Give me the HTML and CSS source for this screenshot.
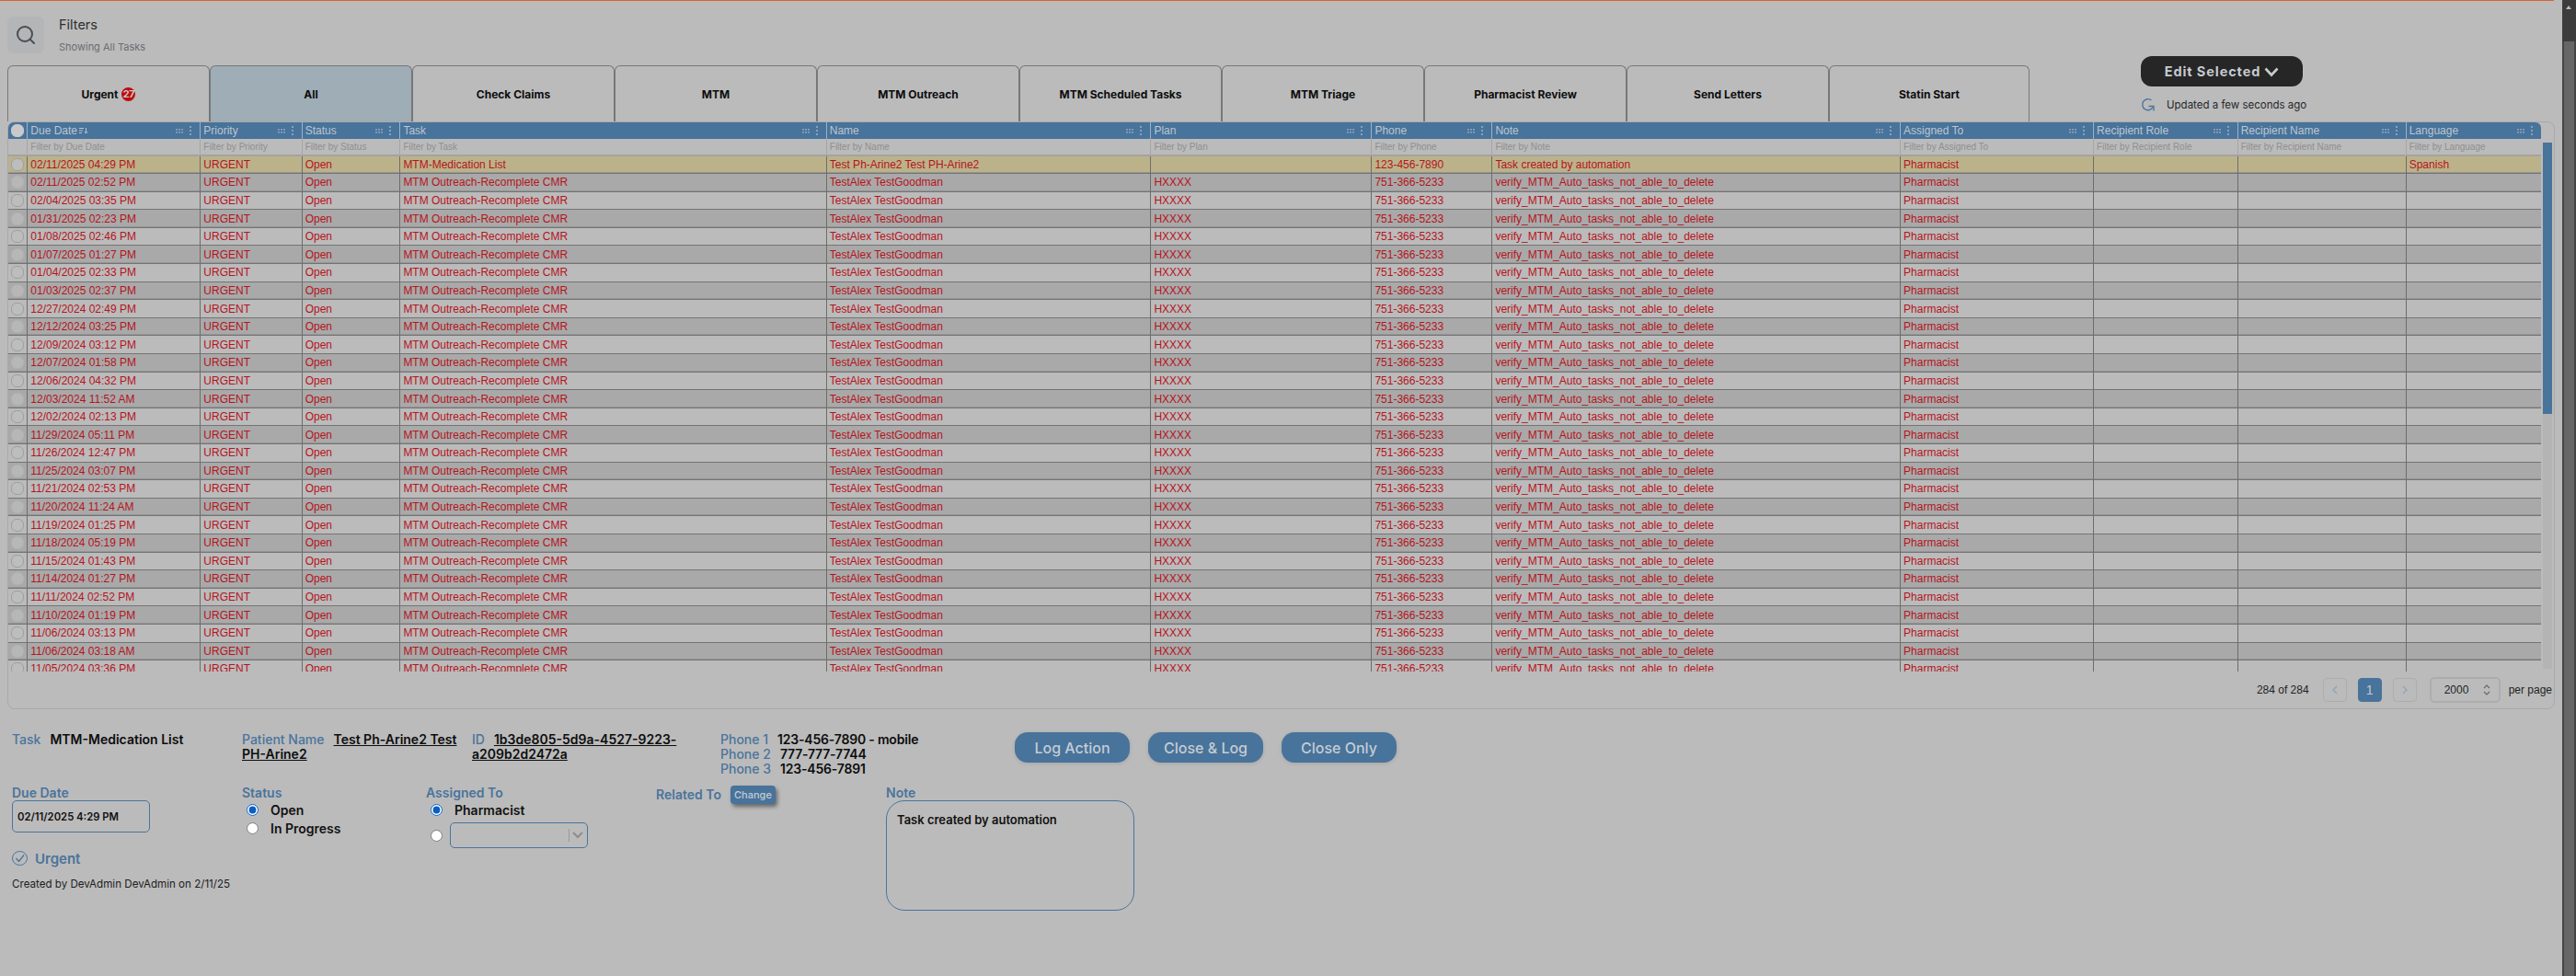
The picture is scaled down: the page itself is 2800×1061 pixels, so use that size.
FILE: index.html
```html
<!DOCTYPE html>
<html lang="en">
<head>
<meta charset="utf-8">
<title>Tasks</title>
<link rel="stylesheet" href="styles.css">
</head>
<body>
<svg class="defs" width="0" height="0" aria-hidden="true">
  <symbol id="grip" viewBox="0 0 20 10">
    <g fill="#8aa2ba">
      <rect x="0" y="3" width="2" height="1.6"/><rect x="3" y="3" width="2" height="1.6"/><rect x="6" y="3" width="2" height="1.6"/>
      <rect x="0" y="6" width="2" height="1.6"/><rect x="3" y="6" width="2" height="1.6"/><rect x="6" y="6" width="2" height="1.6"/>
      <rect x="15" y="0" width="2" height="2"/><rect x="15" y="4" width="2" height="2"/><rect x="15" y="8" width="2" height="2"/>
    </g>
  </symbol>
</svg>
<div class="window">
  <main class="page">
    <div class="accent"></div>
    <header class="filters">
      <div class="search-box">
        <svg width="24" height="24" viewBox="0 0 24 24" fill="none" stroke="#4a4d52" stroke-width="2" stroke-linecap="round"><circle cx="11" cy="11" r="8"/><path d="M21 21l-4.35-4.35"/></svg>
      </div>
      <div class="filters-text">
        <div class="filters-title">Filters</div>
        <div class="filters-sub">Showing All Tasks</div>
      </div>
    </header>
    <section class="tabbar">
      <nav class="tabs">
        <a class="tab">Urgent <span class="badge">27</span></a>
        <a class="tab tab-active">All</a>
        <a class="tab">Check Claims</a>
        <a class="tab">MTM</a>
        <a class="tab">MTM Outreach</a>
        <a class="tab">MTM Scheduled Tasks</a>
        <a class="tab">MTM Triage</a>
        <a class="tab">Pharmacist Review</a>
        <a class="tab">Send Letters</a>
        <a class="tab">Statin Start</a>
      </nav>
      <div class="tab-side">
        <button class="edit-btn">Edit Selected
          <svg width="16" height="12" viewBox="0 0 16 12" fill="none" stroke="#c6ccd2" stroke-width="2.6"><path d="M1.5 2.5L8 9.5l6.5-7"/></svg>
        </button>
        <div class="updated">
          <svg width="16" height="15" viewBox="0 0 16 15" fill="none" stroke="#4a749c" stroke-width="1.4"><path d="M11.5 3A6 6 0 1 0 13 10.5"/><path d="M8.5 9.5h5.5v5"/></svg>
          <span>Updated a few seconds ago</span>
        </div>
      </div>
    </section>
    <section class="grid-card">
      <div class="grid-body">
        <div class="grid-scroll">
          <table class="grid">
            <colgroup>
              <col class="c-chk"><col class="c-due"><col class="c-pri"><col class="c-sta"><col class="c-task"><col class="c-name"><col class="c-plan"><col class="c-phone"><col class="c-note"><col class="c-asg"><col class="c-role"><col class="c-rname"><col class="c-lang">
            </colgroup>
            <thead>
              <tr class="head">
                <th class="first"><span class="chk chk-head"></span></th>
                <th><div class="th"><span>Due Date<svg class="sort" width="10" height="8" viewBox="0 0 10 8" fill="none" stroke="#b8c4d0"><path d="M0 1.5h5M0 4h4M0 6.5h3M7.5 1v6M5.8 5.2L7.5 7l1.7-1.8"/></svg></span><svg class="grip"><use href="#grip"/></svg></div></th>
                <th><div class="th"><span>Priority</span><svg class="grip"><use href="#grip"/></svg></div></th>
                <th><div class="th"><span>Status</span><svg class="grip"><use href="#grip"/></svg></div></th>
                <th><div class="th"><span>Task</span><svg class="grip"><use href="#grip"/></svg></div></th>
                <th><div class="th"><span>Name</span><svg class="grip"><use href="#grip"/></svg></div></th>
                <th><div class="th"><span>Plan</span><svg class="grip"><use href="#grip"/></svg></div></th>
                <th><div class="th"><span>Phone</span><svg class="grip"><use href="#grip"/></svg></div></th>
                <th><div class="th"><span>Note</span><svg class="grip"><use href="#grip"/></svg></div></th>
                <th><div class="th"><span>Assigned To</span><svg class="grip"><use href="#grip"/></svg></div></th>
                <th><div class="th"><span>Recipient Role</span><svg class="grip"><use href="#grip"/></svg></div></th>
                <th><div class="th"><span>Recipient Name</span><svg class="grip"><use href="#grip"/></svg></div></th>
                <th class="last"><div class="th"><span>Language</span><svg class="grip"><use href="#grip"/></svg></div></th>
              </tr>
              <tr class="filter">
                <th></th><th>Filter by Due Date</th><th>Filter by Priority</th><th>Filter by Status</th><th>Filter by Task</th><th>Filter by Name</th><th>Filter by Plan</th><th>Filter by Phone</th><th>Filter by Note</th><th>Filter by Assigned To</th><th>Filter by Recipient Role</th><th>Filter by Recipient Name</th><th>Filter by Language</th>
              </tr>
            </thead>
            <tbody>
              <tr class="selected"><td><span class="chk"></span></td><td>02/11/2025 04:29 PM</td><td>URGENT</td><td>Open</td><td>MTM-Medication List</td><td>Test Ph-Arine2 Test PH-Arine2</td><td></td><td>123-456-7890</td><td>Task created by automation</td><td>Pharmacist</td><td></td><td></td><td>Spanish</td></tr>
              <tr><td><span class="chk"></span></td><td>02/11/2025 02:52 PM</td><td>URGENT</td><td>Open</td><td>MTM Outreach-Recomplete CMR</td><td>TestAlex TestGoodman</td><td>HXXXX</td><td>751-366-5233</td><td>verify_MTM_Auto_tasks_not_able_to_delete</td><td>Pharmacist</td><td></td><td></td><td></td></tr>
              <tr><td><span class="chk"></span></td><td>02/04/2025 03:35 PM</td><td>URGENT</td><td>Open</td><td>MTM Outreach-Recomplete CMR</td><td>TestAlex TestGoodman</td><td>HXXXX</td><td>751-366-5233</td><td>verify_MTM_Auto_tasks_not_able_to_delete</td><td>Pharmacist</td><td></td><td></td><td></td></tr>
              <tr><td><span class="chk"></span></td><td>01/31/2025 02:23 PM</td><td>URGENT</td><td>Open</td><td>MTM Outreach-Recomplete CMR</td><td>TestAlex TestGoodman</td><td>HXXXX</td><td>751-366-5233</td><td>verify_MTM_Auto_tasks_not_able_to_delete</td><td>Pharmacist</td><td></td><td></td><td></td></tr>
              <tr><td><span class="chk"></span></td><td>01/08/2025 02:46 PM</td><td>URGENT</td><td>Open</td><td>MTM Outreach-Recomplete CMR</td><td>TestAlex TestGoodman</td><td>HXXXX</td><td>751-366-5233</td><td>verify_MTM_Auto_tasks_not_able_to_delete</td><td>Pharmacist</td><td></td><td></td><td></td></tr>
              <tr><td><span class="chk"></span></td><td>01/07/2025 01:27 PM</td><td>URGENT</td><td>Open</td><td>MTM Outreach-Recomplete CMR</td><td>TestAlex TestGoodman</td><td>HXXXX</td><td>751-366-5233</td><td>verify_MTM_Auto_tasks_not_able_to_delete</td><td>Pharmacist</td><td></td><td></td><td></td></tr>
              <tr><td><span class="chk"></span></td><td>01/04/2025 02:33 PM</td><td>URGENT</td><td>Open</td><td>MTM Outreach-Recomplete CMR</td><td>TestAlex TestGoodman</td><td>HXXXX</td><td>751-366-5233</td><td>verify_MTM_Auto_tasks_not_able_to_delete</td><td>Pharmacist</td><td></td><td></td><td></td></tr>
              <tr><td><span class="chk"></span></td><td>01/03/2025 02:37 PM</td><td>URGENT</td><td>Open</td><td>MTM Outreach-Recomplete CMR</td><td>TestAlex TestGoodman</td><td>HXXXX</td><td>751-366-5233</td><td>verify_MTM_Auto_tasks_not_able_to_delete</td><td>Pharmacist</td><td></td><td></td><td></td></tr>
              <tr><td><span class="chk"></span></td><td>12/27/2024 02:49 PM</td><td>URGENT</td><td>Open</td><td>MTM Outreach-Recomplete CMR</td><td>TestAlex TestGoodman</td><td>HXXXX</td><td>751-366-5233</td><td>verify_MTM_Auto_tasks_not_able_to_delete</td><td>Pharmacist</td><td></td><td></td><td></td></tr>
              <tr><td><span class="chk"></span></td><td>12/12/2024 03:25 PM</td><td>URGENT</td><td>Open</td><td>MTM Outreach-Recomplete CMR</td><td>TestAlex TestGoodman</td><td>HXXXX</td><td>751-366-5233</td><td>verify_MTM_Auto_tasks_not_able_to_delete</td><td>Pharmacist</td><td></td><td></td><td></td></tr>
              <tr><td><span class="chk"></span></td><td>12/09/2024 03:12 PM</td><td>URGENT</td><td>Open</td><td>MTM Outreach-Recomplete CMR</td><td>TestAlex TestGoodman</td><td>HXXXX</td><td>751-366-5233</td><td>verify_MTM_Auto_tasks_not_able_to_delete</td><td>Pharmacist</td><td></td><td></td><td></td></tr>
              <tr><td><span class="chk"></span></td><td>12/07/2024 01:58 PM</td><td>URGENT</td><td>Open</td><td>MTM Outreach-Recomplete CMR</td><td>TestAlex TestGoodman</td><td>HXXXX</td><td>751-366-5233</td><td>verify_MTM_Auto_tasks_not_able_to_delete</td><td>Pharmacist</td><td></td><td></td><td></td></tr>
              <tr><td><span class="chk"></span></td><td>12/06/2024 04:32 PM</td><td>URGENT</td><td>Open</td><td>MTM Outreach-Recomplete CMR</td><td>TestAlex TestGoodman</td><td>HXXXX</td><td>751-366-5233</td><td>verify_MTM_Auto_tasks_not_able_to_delete</td><td>Pharmacist</td><td></td><td></td><td></td></tr>
              <tr><td><span class="chk"></span></td><td>12/03/2024 11:52 AM</td><td>URGENT</td><td>Open</td><td>MTM Outreach-Recomplete CMR</td><td>TestAlex TestGoodman</td><td>HXXXX</td><td>751-366-5233</td><td>verify_MTM_Auto_tasks_not_able_to_delete</td><td>Pharmacist</td><td></td><td></td><td></td></tr>
              <tr><td><span class="chk"></span></td><td>12/02/2024 02:13 PM</td><td>URGENT</td><td>Open</td><td>MTM Outreach-Recomplete CMR</td><td>TestAlex TestGoodman</td><td>HXXXX</td><td>751-366-5233</td><td>verify_MTM_Auto_tasks_not_able_to_delete</td><td>Pharmacist</td><td></td><td></td><td></td></tr>
              <tr><td><span class="chk"></span></td><td>11/29/2024 05:11 PM</td><td>URGENT</td><td>Open</td><td>MTM Outreach-Recomplete CMR</td><td>TestAlex TestGoodman</td><td>HXXXX</td><td>751-366-5233</td><td>verify_MTM_Auto_tasks_not_able_to_delete</td><td>Pharmacist</td><td></td><td></td><td></td></tr>
              <tr><td><span class="chk"></span></td><td>11/26/2024 12:47 PM</td><td>URGENT</td><td>Open</td><td>MTM Outreach-Recomplete CMR</td><td>TestAlex TestGoodman</td><td>HXXXX</td><td>751-366-5233</td><td>verify_MTM_Auto_tasks_not_able_to_delete</td><td>Pharmacist</td><td></td><td></td><td></td></tr>
              <tr><td><span class="chk"></span></td><td>11/25/2024 03:07 PM</td><td>URGENT</td><td>Open</td><td>MTM Outreach-Recomplete CMR</td><td>TestAlex TestGoodman</td><td>HXXXX</td><td>751-366-5233</td><td>verify_MTM_Auto_tasks_not_able_to_delete</td><td>Pharmacist</td><td></td><td></td><td></td></tr>
              <tr><td><span class="chk"></span></td><td>11/21/2024 02:53 PM</td><td>URGENT</td><td>Open</td><td>MTM Outreach-Recomplete CMR</td><td>TestAlex TestGoodman</td><td>HXXXX</td><td>751-366-5233</td><td>verify_MTM_Auto_tasks_not_able_to_delete</td><td>Pharmacist</td><td></td><td></td><td></td></tr>
              <tr><td><span class="chk"></span></td><td>11/20/2024 11:24 AM</td><td>URGENT</td><td>Open</td><td>MTM Outreach-Recomplete CMR</td><td>TestAlex TestGoodman</td><td>HXXXX</td><td>751-366-5233</td><td>verify_MTM_Auto_tasks_not_able_to_delete</td><td>Pharmacist</td><td></td><td></td><td></td></tr>
              <tr><td><span class="chk"></span></td><td>11/19/2024 01:25 PM</td><td>URGENT</td><td>Open</td><td>MTM Outreach-Recomplete CMR</td><td>TestAlex TestGoodman</td><td>HXXXX</td><td>751-366-5233</td><td>verify_MTM_Auto_tasks_not_able_to_delete</td><td>Pharmacist</td><td></td><td></td><td></td></tr>
              <tr><td><span class="chk"></span></td><td>11/18/2024 05:19 PM</td><td>URGENT</td><td>Open</td><td>MTM Outreach-Recomplete CMR</td><td>TestAlex TestGoodman</td><td>HXXXX</td><td>751-366-5233</td><td>verify_MTM_Auto_tasks_not_able_to_delete</td><td>Pharmacist</td><td></td><td></td><td></td></tr>
              <tr><td><span class="chk"></span></td><td>11/15/2024 01:43 PM</td><td>URGENT</td><td>Open</td><td>MTM Outreach-Recomplete CMR</td><td>TestAlex TestGoodman</td><td>HXXXX</td><td>751-366-5233</td><td>verify_MTM_Auto_tasks_not_able_to_delete</td><td>Pharmacist</td><td></td><td></td><td></td></tr>
              <tr><td><span class="chk"></span></td><td>11/14/2024 01:27 PM</td><td>URGENT</td><td>Open</td><td>MTM Outreach-Recomplete CMR</td><td>TestAlex TestGoodman</td><td>HXXXX</td><td>751-366-5233</td><td>verify_MTM_Auto_tasks_not_able_to_delete</td><td>Pharmacist</td><td></td><td></td><td></td></tr>
              <tr><td><span class="chk"></span></td><td>11/11/2024 02:52 PM</td><td>URGENT</td><td>Open</td><td>MTM Outreach-Recomplete CMR</td><td>TestAlex TestGoodman</td><td>HXXXX</td><td>751-366-5233</td><td>verify_MTM_Auto_tasks_not_able_to_delete</td><td>Pharmacist</td><td></td><td></td><td></td></tr>
              <tr><td><span class="chk"></span></td><td>11/10/2024 01:19 PM</td><td>URGENT</td><td>Open</td><td>MTM Outreach-Recomplete CMR</td><td>TestAlex TestGoodman</td><td>HXXXX</td><td>751-366-5233</td><td>verify_MTM_Auto_tasks_not_able_to_delete</td><td>Pharmacist</td><td></td><td></td><td></td></tr>
              <tr><td><span class="chk"></span></td><td>11/06/2024 03:13 PM</td><td>URGENT</td><td>Open</td><td>MTM Outreach-Recomplete CMR</td><td>TestAlex TestGoodman</td><td>HXXXX</td><td>751-366-5233</td><td>verify_MTM_Auto_tasks_not_able_to_delete</td><td>Pharmacist</td><td></td><td></td><td></td></tr>
              <tr><td><span class="chk"></span></td><td>11/06/2024 03:18 AM</td><td>URGENT</td><td>Open</td><td>MTM Outreach-Recomplete CMR</td><td>TestAlex TestGoodman</td><td>HXXXX</td><td>751-366-5233</td><td>verify_MTM_Auto_tasks_not_able_to_delete</td><td>Pharmacist</td><td></td><td></td><td></td></tr>
              <tr><td><span class="chk"></span></td><td>11/05/2024 03:36 PM</td><td>URGENT</td><td>Open</td><td>MTM Outreach-Recomplete CMR</td><td>TestAlex TestGoodman</td><td>HXXXX</td><td>751-366-5233</td><td>verify_MTM_Auto_tasks_not_able_to_delete</td><td>Pharmacist</td><td></td><td></td><td></td></tr>
            </tbody>
          </table>
        </div>
        <div class="vscroll"><div class="vthumb"></div></div>
      </div>
      <footer class="pager">
        <span class="count">284 of 284</span>
        <span class="page-btn"><svg width="8" height="12" viewBox="0 0 8 12" fill="none" stroke="#8ea4b8" stroke-width="1.4"><path d="M6 2L2 6l4 4"/></svg></span>
        <span class="page-btn page-on">1</span>
        <span class="page-btn"><svg width="8" height="12" viewBox="0 0 8 12" fill="none" stroke="#8ea4b8" stroke-width="1.4"><path d="M2 2l4 4-4 4"/></svg></span>
        <span class="per-select">2000<svg width="8" height="14" viewBox="0 0 8 14" fill="none" stroke="#666" stroke-width="1.1"><path d="M1 5l3-3 3 3M1 9l3 3 3-3"/></svg></span>
        <span class="per-label">per page</span>
      </footer>
    </section>
    <section class="detail">
      <div class="summary">
        <div class="line"><span class="lbl">Task</span><b class="val">MTM-Medication List</b></div>
        <div class="line"><span class="lbl">Patient Name</span><a class="val link">Test Ph-Arine2 Test PH-Arine2</a></div>
        <div class="line id-line"><span class="lbl">ID</span><a class="val link">1b3de805-5d9a-4527-9223-a209b2d2472a</a></div>
        <div class="phones">
          <div class="line"><span class="lbl">Phone 1</span><b class="val tight">123-456-7890 - mobile</b></div>
          <div class="line"><span class="lbl">Phone 2</span><b class="val tight">777-777-7744</b></div>
          <div class="line"><span class="lbl">Phone 3</span><b class="val tight">123-456-7891</b></div>
        </div>
        <div class="actions">
          <button class="act">Log Action</button>
          <button class="act">Close &amp; Log</button>
          <button class="act">Close Only</button>
        </div>
      </div>
      <div class="form">
        <div class="col">
          <label class="lbl block">Due Date</label>
          <input class="date-input" type="text" value="02/11/2025 4:29 PM">
          <div class="urgent">
            <svg width="17" height="16" viewBox="0 0 17 16" fill="none" stroke="#4a749c"><ellipse cx="8.5" cy="8" rx="8" ry="7.5"/><path d="M4.5 8l3 3.5L13 4.5" stroke-width="1.3"/></svg>
            <span>Urgent</span>
          </div>
          <div class="created">Created by DevAdmin DevAdmin on 2/11/25</div>
        </div>
        <div class="col">
          <label class="lbl block">Status</label>
          <label class="radio"><input type="radio" name="status" checked><span>Open</span></label>
          <label class="radio"><input type="radio" name="status"><span>In Progress</span></label>
        </div>
        <div class="col">
          <label class="lbl block">Assigned To</label>
          <label class="radio"><input type="radio" name="assign" checked><span>Pharmacist</span></label>
          <div class="assign-other">
            <input type="radio" name="assign">
            <div class="combo"><span class="combo-sep"></span><svg width="12" height="8" viewBox="0 0 12 8" fill="none" stroke="#8c8c8c" stroke-width="2"><path d="M1 1l5 5 5-5"/></svg></div>
          </div>
        </div>
        <div class="col related">
          <span class="lbl">Related To</span><button class="change">Change</button>
        </div>
        <div class="col">
          <label class="lbl block">Note</label>
          <textarea class="note">Task created by automation</textarea>
        </div>
      </div>
    </section>
  </main>
  <aside class="win-scroll">
    <div class="win-arrow"></div>
  </aside>
</div>
</body>
</html>
```

FILE: styles.css
```css
* { box-sizing: border-box; }
html, body { margin: 0; height: 100%; overflow: hidden; }
body { background: #bbbbbb; font-family: Inter, "Liberation Sans", sans-serif; color: #111; }
.defs { position: absolute; }

.window { display: flex; height: 1061px; }
.page { width: 2785px; padding: 0 8px; }
.win-scroll { width: 15px; background: #666; border-left: 2px solid #444; border-right: 2px solid #444; }
.win-arrow { height: 45px; background: #3c3c3c; margin: 0 -2px; position: relative; }
.win-arrow::after { content: ""; position: absolute; left: 4px; top: 6px; border: 3.5px solid transparent; border-top: 0; border-bottom: 4px solid #bbb; }

.accent { height: 1px; margin-left: -8px; width: 2776px; background: #d9622f; }

.filters { display: flex; gap: 16px; padding-top: 17px; height: 60px; }
.search-box { width: 40px; height: 40px; border-radius: 6px; background: #b4b5b6; display: flex; align-items: center; justify-content: center; }
.filters-title { font-size: 14.5px; line-height: 18px; color: #2c2e31; }
.filters-sub { font-size: 11px; line-height: 14px; margin-top: 8px; color: #6a6d72; }

.tabbar { display: flex; align-items: flex-end; height: 71px; }
.tabs { display: flex; height: 61px; width: 2198px; }
.tab { flex: 0 0 220px; display: flex; align-items: center; justify-content: center; gap: 4px; border: 1px solid #777; border-bottom: 0; border-radius: 6px 6px 0 0; font-size: 12px; font-weight: 700; color: #0d0d0d; }
.tab:last-child { flex-basis: 218px; }
.tab-active { background: #9eadb6; }
.badge { width: 15px; height: 15px; border-radius: 50%; background: #c00a0c; color: #c8c8c8; font-size: 11px; font-weight: 700; display: flex; align-items: center; justify-content: center; letter-spacing: -.5px; }

.tab-side { margin-left: 121px; height: 71px; align-self: flex-start; }
.edit-btn { width: 176px; height: 33px; border: 0; border-radius: 12px; background: #262626; color: #c6ccd2; font: 700 14.5px Inter, sans-serif; letter-spacing: .9px; display: flex; align-items: center; justify-content: center; gap: 4px; padding: 0; }
.updated { display: flex; align-items: center; gap: 12px; margin-top: 12px; font-size: 11.5px; color: #26282b; }

.grid-card { height: 639px; border: 1px solid #a9a9a9; border-radius: 8px; background: #bbb; }
.grid-body { display: flex; height: 597px; }
.grid-scroll { width: 2753px; overflow: hidden; border-radius: 6px 6px 0 0; }
.vscroll { width: 10px; margin: 22px 0 3px 2px; background: #b4b4b4; }
.vthumb { height: 295px; background: #48739b; }

.grid { width: 2753px; table-layout: fixed; border-collapse: separate; border-spacing: 0; font: 12px "Liberation Sans", Arial, sans-serif; }
.c-chk { width: 21.3px; } .c-due { width: 188px; } .c-pri { width: 110.4px; } .c-sta { width: 106.7px; }
.c-task { width: 463.4px; } .c-name { width: 352.6px; } .c-plan { width: 240px; } .c-phone { width: 131px; }
.c-note { width: 443.7px; } .c-asg { width: 210px; } .c-role { width: 156.6px; } .c-rname { width: 183px; } .c-lang { width: 146.2px; }

.grid th { font-weight: 400; text-align: left; padding: 0 3px; overflow: hidden; white-space: nowrap; }
.head th { height: 18px; background: #48739b; color: #bcc6d0; border-right: 1px solid #9fb2c5; }
.head th.last { border-right: 0; }
.th { display: flex; align-items: center; justify-content: space-between; }
.sort { margin-left: 2px; }
.grip { width: 20px; height: 10px; margin-right: 3px; flex: none; }
.filter th { height: 18.5px; background: #bbb; color: #8f8f8f; font-size: 10px; border-right: 1px solid #a6a6a6; border-bottom: 2px solid #a3a3a3; }
.filter th:last-child { border-right: 0; }

.grid td { height: 19.6px; padding: 0 3px; background: #bbb; color: #b5141c; white-space: nowrap; overflow: hidden; border-right: 1px solid #6c6c6c; border-bottom: 1px solid #747474; }
.grid td:last-child { border-right: 0; }
.grid tbody tr:nth-child(even) td { background: #a9a9a9; box-shadow: inset 0 -1px 0 #959595; }
.grid tbody tr.selected td { background: #bcb28a; box-shadow: inset 0 -1px 0 #959595; }

.chk { display: block; width: 14px; height: 14px; border: 1px solid #9f9f9f; border-radius: 6px; background: #bdbdbd; }
.chk-head { background: #c9c9c9; border-color: #c9c9c9; }
.grid tbody tr:nth-child(even) .chk { background: #b7b7b7; border-color: #b1b1b1; }

.pager { display: flex; align-items: center; justify-content: flex-end; height: 40px; padding-right: 2px; font: 12px "Liberation Sans", Arial, sans-serif; color: #1f1f1f; }
.count { margin-right: 15px; }
.page-btn { width: 26px; height: 26px; margin-right: 12px; border: 1px solid #adadad; border-radius: 4px; display: flex; align-items: center; justify-content: center; }
.page-on { background: #48739b; border-color: #48739b; color: #c2cad2; font-size: 14px; }
.per-select { width: 77px; height: 28px; margin: 0 9px 0 2px; padding: 0 9px 0 14px; border: 2px solid #adadad; border-radius: 5px; display: flex; align-items: center; justify-content: space-between; }

.detail { padding: 25px 0 0 5px; }
.summary { display: grid; grid-template-columns: 250px 250px 270px 320px auto; height: 58px; font-size: 14px; line-height: 16px; }
.line { font-weight: 600; }
.id-line { padding-right: 25px; }
.lbl { color: #4a749c; font-weight: 500; margin-right: 10px; }
.block { display: block; font-size: 14px; line-height: 16px; margin: 0; font-weight: 600; }
.val { font-weight: 600; color: #0d0d0d; }
.tight { letter-spacing: -.2px; }
.link { text-decoration: underline; }
.actions { display: flex; gap: 20px; align-items: flex-start; }
.act { width: 125px; height: 33px; border: 0; border-radius: 14px; background: #48739b; color: #c4ccd4; font: 500 16px Inter, sans-serif; padding: 0; box-shadow: 0 1px 4px rgba(0,0,0,.12); }

.form { display: grid; grid-template-columns: 250px 200px 250px 250px auto; font-size: 14px; }
.date-input { display: block; width: 150px; height: 35px; border: 1px solid #4a749c; border-radius: 5px; background: transparent; padding: 0 5px; font: 600 11.3px Inter, sans-serif; color: #111; outline: 0; }
.urgent { display: flex; align-items: center; gap: 8px; margin-top: 20px; height: 16px; color: #4a749c; font-weight: 600; font-size: 15px; }
.created { margin-top: 12px; font-size: 11.6px; line-height: 16px; color: #1d1d1d; }
.radio { display: flex; align-items: center; height: 20px; font-weight: 600; color: #111; }
input[type=radio] { appearance: auto; width: 13px; height: 13px; margin: 0 13px 0 5px; accent-color: #0a5ec0; flex: none; }
.assign-other { display: flex; align-items: center; margin-top: 4px; }
.assign-other input { margin-right: 8px; }
.combo { width: 150px; height: 28px; border: 1px solid #4a749c; border-radius: 5px; display: flex; align-items: center; justify-content: flex-end; gap: 3px; padding-right: 4px; }
.combo-sep { width: 1px; height: 14px; background: #9a9a9a; }
.related { display: flex; align-items: flex-start; }
.related .lbl { line-height: 20px; font-weight: 600; }
.change { width: 49px; height: 20px; border: 0; border-radius: 4px; background: #48739b; color: #c4ccd4; font: 500 11px Inter, sans-serif; padding: 0; box-shadow: 2px 3px 4px rgba(0,0,0,.45); }
.note { display: block; width: 270px; height: 120px; border: 1px solid #4a749c; border-radius: 20px; background: transparent; padding: 12px 11px; font: 600 13px Inter, sans-serif; color: #111; resize: none; outline: 0; }
```
